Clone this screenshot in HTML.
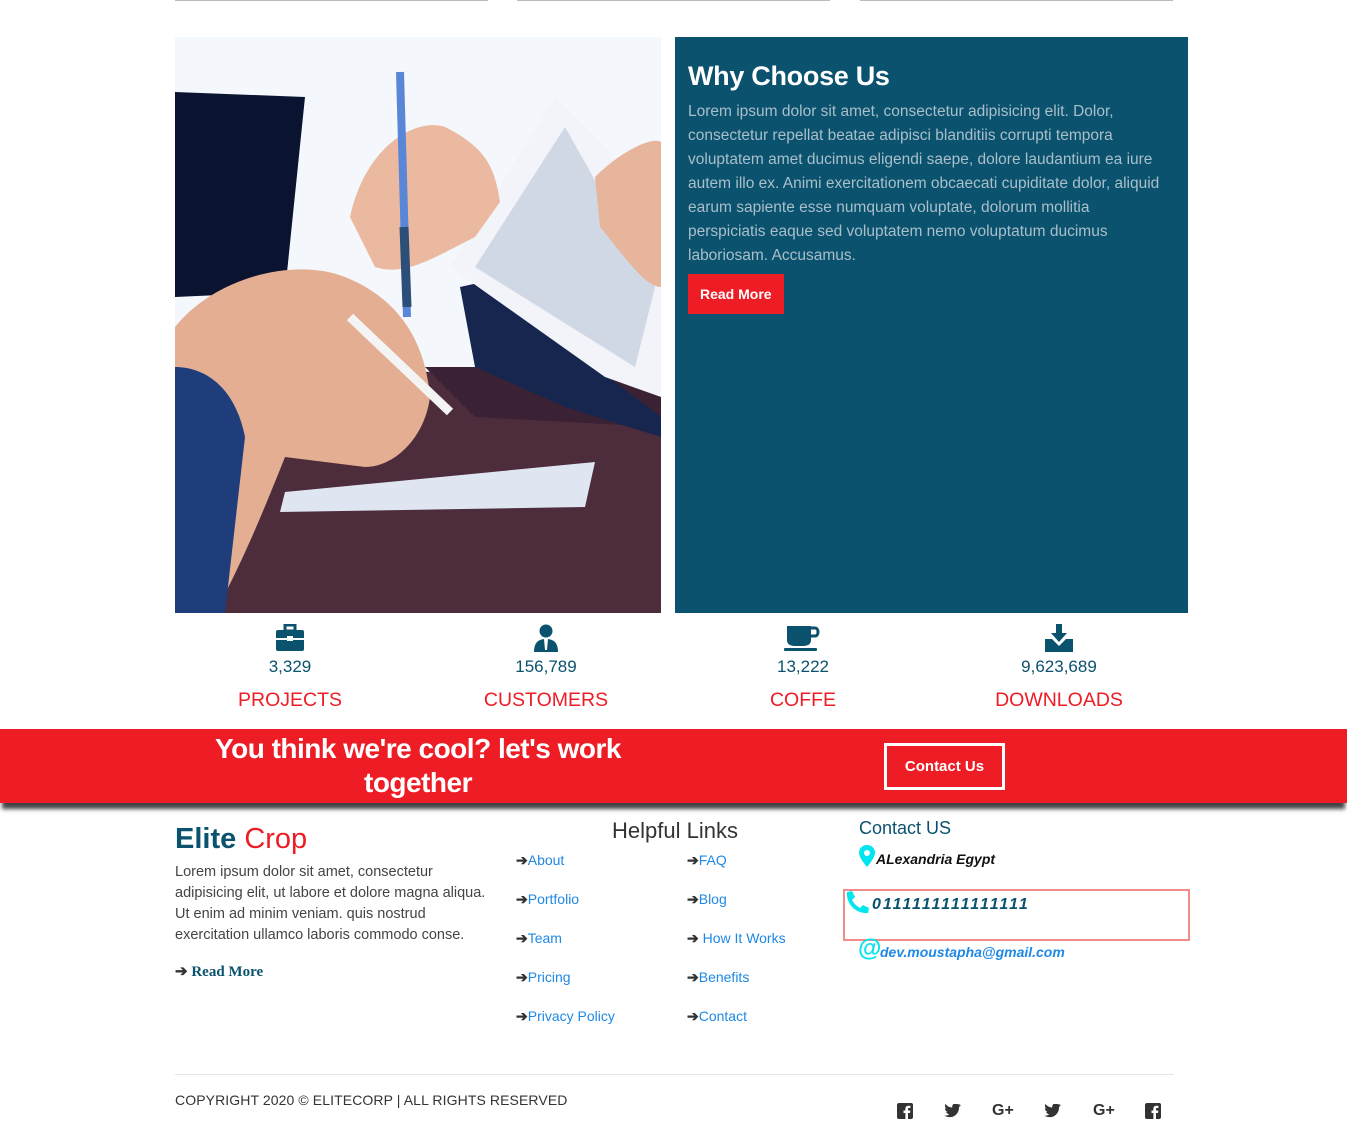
<!DOCTYPE html>
<html><head><meta charset="utf-8">
<style>
*{margin:0;padding:0;box-sizing:border-box}
body{width:1347px;height:1130px;background:#fff;font-family:"Liberation Sans",sans-serif;position:relative;overflow:hidden}
.abs{position:absolute}
.topline{position:absolute;top:0;height:1px;background:#bbb}
.why{left:675px;top:37px;width:513px;height:576px;background:#0b526e;padding:24px 13px}
.why h2{color:#fff;font-size:27px;font-weight:bold;margin-bottom:8px;letter-spacing:-0.3px}
.why p{color:#a9bfca;font-size:15.5px;line-height:24px;width:480px}
.btn{display:inline-block;background:#ee1c25;color:#fff;font-weight:bold;font-size:14px;padding:12px 12px;margin-top:6px}
.stat{position:absolute;top:624px;width:240px;text-align:center}
.stat .n{color:#0b526e;font-size:17px;margin-top:0px}
.stat .l{color:#ee1c25;font-size:19.5px;margin-top:12px}
.banner{left:0;top:729px;width:1347px;height:74px;background:#ee1c25;box-shadow:0 8px 4px -2px #444}
.banner h3{position:absolute;left:190px;top:3px;width:456px;text-align:center;color:#fff;font-size:28px;line-height:34px;font-weight:bold;letter-spacing:-0.5px}
.cbtn{position:absolute;left:884px;top:14px;width:121px;height:47px;border:3px solid #fff;color:#fff;font-weight:bold;font-size:15px;text-align:center;line-height:41px}
.link{position:absolute;font-size:14px;color:#1e88e5}
.link b{color:#333;font-weight:bold}
.soc{position:absolute;top:1102px;font-size:16px;font-weight:bold;color:#333}
</style></head><body>
<div class="topline" style="left:175px;width:313px"></div>
<div class="topline" style="left:517px;width:313px"></div>
<div class="topline" style="left:860px;width:313px"></div>

<svg class="abs" style="left:175px;top:37px" width="486" height="576" viewBox="0 0 486 576">
<rect width="486" height="576" fill="#eef3fa"/>
<rect x="0" y="0" width="486" height="340" fill="#f4f7fc"/>
<polygon points="0,55 130,60 110,255 0,260" fill="#0a1330"/>
<polygon points="0,340 486,330 486,576 0,576" fill="#4d2c3c"/>
<polygon points="250,330 486,330 486,390 300,380" fill="#3a2234"/>
<polygon points="110,455 420,425 410,470 105,475" fill="#dfe6f2"/>
<polygon points="285,250 330,240 420,330 486,380 486,400 390,370 300,330" fill="#16264f"/>
<polygon points="275,230 380,60 440,120 486,220 486,360 430,340" fill="#f2f4f9"/>
<polygon points="300,230 390,90 480,250 460,330" fill="#b9c4d8" opacity="0.6"/>
<path d="M175,180 C190,110 240,80 270,90 C310,110 320,130 325,165 L300,200 C260,220 230,240 200,230 Z" fill="#eab9a0"/>
<path d="M420,140 C450,110 480,100 486,105 L486,250 C470,250 450,220 425,190 Z" fill="#e6b59c"/>
<path d="M0,290 C40,240 120,220 170,240 C220,260 250,300 255,360 C250,400 220,430 190,430 L110,420 C90,470 70,520 40,576 L0,576 Z" fill="#e3ae92"/>
<path d="M0,330 C30,330 60,350 70,400 L50,576 L0,576 Z" fill="#1e3d7a"/>
<line x1="225" y1="35" x2="232" y2="280" stroke="#5a86d8" stroke-width="8"/>
<line x1="229" y1="190" x2="232" y2="270" stroke="#2c4f7a" stroke-width="9"/>
<line x1="175" y1="280" x2="275" y2="375" stroke="#f4f4f4" stroke-width="9"/>
</svg>

<div class="abs why">
<h2>Why Choose Us</h2>
<p>Lorem ipsum dolor sit amet, consectetur adipisicing elit. Dolor, consectetur repellat beatae adipisci blanditiis corrupti tempora voluptatem amet ducimus eligendi saepe, dolore laudantium ea iure autem illo ex. Animi exercitationem obcaecati cupiditate dolor, aliquid earum sapiente esse numquam voluptate, dolorum mollitia perspiciatis eaque sed voluptatem nemo voluptatum ducimus laboriosam. Accusamus.</p>
<span class="btn">Read More</span>
</div>

<div class="stat" style="left:170px">
<svg width="30" height="28" viewBox="0 0 30 28"><rect x="10" y="1" width="10" height="6" fill="none" stroke="#0b526e" stroke-width="3"/><rect x="1" y="6" width="28" height="21" rx="2" fill="#0b526e"/><rect x="1" y="14" width="28" height="2" fill="#fff"/><rect x="12" y="12" width="6" height="5" fill="#fff"/></svg>
<div class="n">3,329</div><div class="l">PROJECTS</div></div>
<div class="stat" style="left:426px">
<svg width="30" height="28" viewBox="0 0 30 28"><circle cx="15" cy="7" r="6.5" fill="#0b526e"/><path d="M3,28 C3,18 8,15 15,15 C22,15 27,18 27,28Z" fill="#0b526e"/><path d="M13,15 L17,15 L16,26 L14,26Z" fill="#fff"/></svg>
<div class="n">156,789</div><div class="l">CUSTOMERS</div></div>
<div class="stat" style="left:683px">
<svg width="38" height="28" viewBox="0 0 38 28"><path d="M3,2 H27 V16 C27,21 23,22 18,22 H12 C7,22 3,21 3,16Z" fill="#0b526e"/><path d="M26,4 H31 C35,4 35,12 31,12 H26" fill="none" stroke="#0b526e" stroke-width="3"/><rect x="0" y="24" width="33" height="3" rx="1" fill="#0b526e"/></svg>
<div class="n">13,222</div><div class="l">COFFE</div></div>
<div class="stat" style="left:939px">
<svg width="30" height="28" viewBox="0 0 30 28"><path d="M12,0 H18 V9 H23 L15,18 L7,9 H12Z" fill="#0b526e"/><path d="M1,15 H8 L15,22 L22,15 H29 V28 H1Z" fill="#0b526e"/></svg>
<div class="n">9,623,689</div><div class="l">DOWNLOADS</div></div>

<div class="abs banner">
<h3>You think we're cool? let's work together</h3>
<div class="cbtn">Contact Us</div>
</div>

<div class="abs" style="left:175px;top:823px;font-size:29px;font-weight:bold;color:#0b526e">Elite <span style="color:#ee1c25;font-weight:normal">Crop</span></div>
<div class="abs" style="left:175px;top:862px;width:318px;font-size:14.5px;line-height:21px;color:#444">Lorem ipsum dolor sit amet, consectetur adipisicing elit, ut labore et dolore magna aliqua. Ut enim ad minim veniam. quis nostrud exercitation ullamco laboris commodo conse.</div>
<div class="abs" style="left:175px;top:962px;font-family:'Liberation Serif',serif;font-size:15px;font-weight:bold;color:#0b526e"><span style="color:#333">➔</span> Read More</div>

<div class="abs" style="left:612px;top:818px;font-size:22px;color:#333">Helpful Links</div>
<div class="link" style="left:516px;top:852px"><b>➔</b>About</div>
<div class="link" style="left:516px;top:891px"><b>➔</b>Portfolio</div>
<div class="link" style="left:516px;top:930px"><b>➔</b>Team</div>
<div class="link" style="left:516px;top:969px"><b>➔</b>Pricing</div>
<div class="link" style="left:516px;top:1008px"><b>➔</b>Privacy Policy</div>
<div class="link" style="left:687px;top:852px"><b>➔</b>FAQ</div>
<div class="link" style="left:687px;top:891px"><b>➔</b>Blog</div>
<div class="link" style="left:687px;top:930px"><b>➔</b> How It Works</div>
<div class="link" style="left:687px;top:969px"><b>➔</b>Benefits</div>
<div class="link" style="left:687px;top:1008px"><b>➔</b>Contact</div>

<div class="abs" style="left:859px;top:818px;font-size:18px;color:#0b526e">Contact US</div>
<svg class="abs" style="left:859px;top:845px" width="16" height="22" viewBox="0 0 16 22"><path d="M8,0 C3,0 0,3.5 0,8 C0,13 8,22 8,22 C8,22 16,13 16,8 C16,3.5 13,0 8,0Z" fill="#00e5ef"/><circle cx="8" cy="8" r="3" fill="#fff"/></svg>
<div class="abs" style="left:876px;top:851px;font-size:14px;font-weight:bold;font-style:italic;color:#111">ALexandria Egypt</div>
<div class="abs" style="left:843px;top:889px;width:347px;height:52px;border:2px solid #f08c8c"></div>
<svg class="abs" style="left:844px;top:890px" width="26" height="24" viewBox="0 0 26 24"><path d="M3,2 L8,1 L11,7 L8,10 C10,14 13,16 16,18 L19,15 L25,18 L24,23 C12,24 2,14 3,2Z" fill="#00e5ef"/></svg>
<div class="abs" style="left:872px;top:896px;font-size:16px;font-weight:bold;font-style:italic;color:#0b526e;letter-spacing:2px">0111111111111111</div>
<div class="abs" style="left:858px;top:935px;font-size:24px;font-weight:bold;color:#00e5ef">@</div>
<div class="abs" style="left:880px;top:944px;font-size:14px;font-weight:bold;font-style:italic;color:#1e88e5">dev.moustapha@gmail.com</div>

<div class="abs" style="left:175px;top:1074px;width:999px;height:1px;background:#e5e5e5"></div>
<div class="abs" style="left:175px;top:1092px;font-size:14px;color:#333;letter-spacing:0.1px">COPYRIGHT 2020 © ELITECORP | ALL RIGHTS RESERVED</div>
<svg class="abs" style="left:897px;top:1103px" width="16" height="16" viewBox="0 0 16 16"><rect width="16" height="16" rx="2" fill="#333"/><path d="M11,16 V10 H13 L13.3,7.5 H11 V6 C11,5.3 11.3,5 12,5 H13.4 V2.8 C12.8,2.7 12,2.7 11.3,2.7 C9.5,2.7 8.4,3.8 8.4,5.7 V7.5 H6.5 V10 H8.4 V16Z" fill="#fff"/></svg>
<svg class="abs" style="left:944px;top:1104px" width="17" height="14" viewBox="0 0 24 20"><path d="M24,2.4 C23,2.8 22,3.1 21,3.2 C22,2.6 22.8,1.6 23.2,0.5 C22.2,1.1 21.1,1.5 20,1.8 C19,0.7 17.6,0 16,0 C13,0 10.6,2.5 10.6,5.5 C10.6,5.9 10.6,6.3 10.7,6.7 C6.3,6.5 2.4,4.4 -0.2,1.1 C-0.7,2 -0.9,2.9 -0.9,3.9 C-0.9,5.8 0.1,7.5 1.5,8.5 C0.6,8.4 -0.2,8.2 -1,7.8 C-1,10.5 1,12.7 3.4,13.2 C2.6,13.5 1.6,13.5 0.9,13.4 C1.6,15.6 3.6,17.2 6,17.3 C3.5,19.2 0.7,20 -2,19.6 C0.4,21.1 3.3,22 6.5,22 C16,22 21.5,14 21.5,6.6 L21.5,5.9 C22.5,5.2 23.4,4.3 24,3.3Z" fill="#333" transform="translate(2,-1) scale(0.9)"/></svg>
<div class="soc" style="left:992px">G+</div>
<svg class="abs" style="left:1044px;top:1104px" width="17" height="14" viewBox="0 0 24 20"><path d="M24,2.4 C23,2.8 22,3.1 21,3.2 C22,2.6 22.8,1.6 23.2,0.5 C22.2,1.1 21.1,1.5 20,1.8 C19,0.7 17.6,0 16,0 C13,0 10.6,2.5 10.6,5.5 C10.6,5.9 10.6,6.3 10.7,6.7 C6.3,6.5 2.4,4.4 -0.2,1.1 C-0.7,2 -0.9,2.9 -0.9,3.9 C-0.9,5.8 0.1,7.5 1.5,8.5 C0.6,8.4 -0.2,8.2 -1,7.8 C-1,10.5 1,12.7 3.4,13.2 C2.6,13.5 1.6,13.5 0.9,13.4 C1.6,15.6 3.6,17.2 6,17.3 C3.5,19.2 0.7,20 -2,19.6 C0.4,21.1 3.3,22 6.5,22 C16,22 21.5,14 21.5,6.6 L21.5,5.9 C22.5,5.2 23.4,4.3 24,3.3Z" fill="#333" transform="translate(2,-1) scale(0.9)"/></svg>
<div class="soc" style="left:1093px">G+</div>
<svg class="abs" style="left:1145px;top:1103px" width="16" height="16" viewBox="0 0 16 16"><rect width="16" height="16" rx="2" fill="#333"/><path d="M11,16 V10 H13 L13.3,7.5 H11 V6 C11,5.3 11.3,5 12,5 H13.4 V2.8 C12.8,2.7 12,2.7 11.3,2.7 C9.5,2.7 8.4,3.8 8.4,5.7 V7.5 H6.5 V10 H8.4 V16Z" fill="#fff"/></svg>
</body></html>
